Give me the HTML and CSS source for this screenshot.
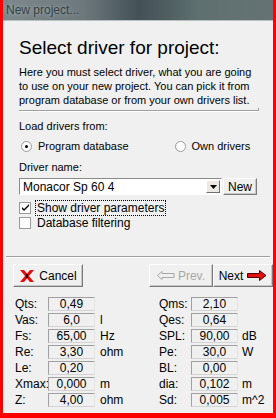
FILE: index.html
```html
<!DOCTYPE html>
<html lang="en">
<head>
    <meta charset="UTF-8">
    <title>New project...</title>
    <link rel="stylesheet" href="styles.css">
</head>
<body>
    <div class="window">
        <div class="titlebar">New project...</div>

        <div class="client">
            <div class="intro">
                <h1>Select driver for project:</h1>
                <p class="text">Here you must select driver, what you are going<br>to use on your new project. You can pick it from<br>program database or from your own drivers list.</p>
                <div class="sep short"></div>

                <div class="line">Load drivers from:</div>
                <div class="radios">
                    <div class="radio checked"><span class="dot"></span>Program database</div>
                    <div class="radio"><span class="dot"></span>Own drivers</div>
                </div>

                <div class="line">Driver name:</div>
                <div class="combo-row">
                    <div class="combo">
                        <span class="combo-text">Monacor Sp 60 4</span>
                        <span class="drop">
                            <svg width="7" height="4" viewBox="0 0 7 4"><path d="M0 0h7L3.5 4z" fill="#000"/></svg>
                        </span>
                    </div>
                    <div class="btn new">New</div>
                </div>

                <div class="check checked">
                    <span class="box">
                        <svg width="9" height="9" viewBox="0 0 9 9"><path d="M1 4l2 2 5-5v2L3 8 1 6z" fill="#000"/></svg>
                    </span>
                    <span class="focus">Show driver parameters</span>
                </div>
                <div class="check">
                    <span class="box"></span>
                    <span>Database filtering</span>
                </div>
            </div>

            <div class="sep wide"></div>

            <div class="buttons">
                <div class="btn cancel">
                    <svg width="16" height="14" viewBox="0 0 16 14">
                        <path d="M1 1h4l3 3.5L11 1h4l-5 6 5 6h-4l-3-3.5L5 13H1l5-6z" fill="#e01010"/>
                        <path d="M7 5h2v4H7z" fill="#200000"/>
                    </svg>
                    Cancel
                </div>
                <div class="nav">
                    <div class="btn prev">
                        <svg width="18" height="9" viewBox="0 0 18 9">
                            <path d="M0.5 4.5L5 0.5v2h12v4H5v2z" fill="none" stroke="#a8a8a8"/>
                        </svg>
                        Prev.
                    </div>
                    <div class="btn next">
                        Next
                        <svg width="20" height="11" viewBox="0 0 20 11">
                            <path d="M0.5 3.5h12v-3L19 5.5l-6.5 5v-3h-12z" fill="#e01010" stroke="#500000"/>
                        </svg>
                    </div>
                </div>
            </div>

            <div class="params">
                <div class="col left">
                    <div class="row"><span class="name">Qts:</span><span class="val">0,49</span><span class="unit"></span></div>
                    <div class="row"><span class="name">Vas:</span><span class="val">6,0</span><span class="unit">l</span></div>
                    <div class="row"><span class="name">Fs:</span><span class="val">65,00</span><span class="unit">Hz</span></div>
                    <div class="row"><span class="name">Re:</span><span class="val">3,30</span><span class="unit">ohm</span></div>
                    <div class="row"><span class="name">Le:</span><span class="val">0,20</span><span class="unit"></span></div>
                    <div class="row"><span class="name">Xmax:</span><span class="val">0,000</span><span class="unit">m</span></div>
                    <div class="row"><span class="name">Z:</span><span class="val">4,00</span><span class="unit">ohm</span></div>
                </div>
                <div class="col right">
                    <div class="row"><span class="name">Qms:</span><span class="val">2,10</span><span class="unit"></span></div>
                    <div class="row"><span class="name">Qes:</span><span class="val">0,64</span><span class="unit"></span></div>
                    <div class="row"><span class="name">SPL:</span><span class="val">90,00</span><span class="unit">dB</span></div>
                    <div class="row"><span class="name">Pe:</span><span class="val">30,0</span><span class="unit">W</span></div>
                    <div class="row"><span class="name">BL:</span><span class="val">0,00</span><span class="unit"></span></div>
                    <div class="row"><span class="name">dia:</span><span class="val">0,102</span><span class="unit">m</span></div>
                    <div class="row"><span class="name">Sd:</span><span class="val">0,005</span><span class="unit">m^2</span></div>
                </div>
            </div>
        </div>
    </div>
</body>
</html>
```

FILE: styles.css
```css
body {
    margin: 0;
    font-family: 'Liberation Sans', Arial, sans-serif;
    font-size: 11px;
    color: #000;
}

.window {
    width: 276px;
    height: 418px;
    box-sizing: border-box;
    background: #f00;
    padding: 0 3px 5px 3px;
    display: flex;
    flex-direction: column;
}

.titlebar {
    height: 20px;
    line-height: 20px;
    padding-left: 3px;
    font-size: 12px;
    color: #334044;
    text-shadow: 0 0 4px rgba(200, 210, 212, 0.7);
    background: linear-gradient(to right, #7d898d 0%, #6c787c 30%, #445157 50%, #4e5d60 60%, #5f7070 72%, #657274 100%);
    border-bottom: 1px solid #b8c0c2;
}

.client {
    flex: 1;
    background: #f0f0f0;
    display: flex;
    flex-direction: column;
}

.intro {
    padding: 0 0 0 16px;
}

h1 {
    margin: 17px 0 0 0;
    font-size: 19px;
    font-weight: normal;
    line-height: 20px;
    height: 20px;
}

.text {
    margin: 7px 0 0 0;
    line-height: 14px;
}

.sep {
    height: 0;
    border-top: 1px solid #a0a0a0;
    border-bottom: 1px solid #fff;
}

.sep.short {
    width: 240px;
    margin-top: 3px;
    position: relative;
}

.sep.short::after {
    content: '';
    position: absolute;
    right: 0;
    top: -3px;
    height: 3px;
    border-right: 1px solid #a0a0a0;
}

.line {
    height: 16px;
    line-height: 16px;
}

.intro .sep + .line {
    margin-top: 6px;
}

.radios {
    display: flex;
    height: 20px;
    align-items: center;
    margin-top: 2px;
}

.radio {
    display: flex;
    align-items: center;
    gap: 6px;
}

.radio + .radio {
    margin-left: 44px;
}

.dot {
    width: 11px;
    height: 11px;
    box-sizing: border-box;
    border-radius: 50%;
    border: 1px solid #9a9a9a;
    background: #fff;
    margin-left: 2px;
    position: relative;
}

.radio.checked .dot::after {
    content: '';
    position: absolute;
    left: 3px;
    top: 3px;
    width: 3px;
    height: 3px;
    border-radius: 50%;
    background: #000;
}

.radios + .line {
    margin-top: 3px;
}

.combo-row {
    display: flex;
    align-items: center;
    margin-top: 3px;
    height: 17px;
}

.combo {
    width: 203px;
    height: 17px;
    box-sizing: border-box;
    background: #fff;
    border: 1px solid;
    border-color: #8a8a8a #fff #fff #8a8a8a;
    display: flex;
    align-items: center;
}

.combo-text {
    flex: 1;
    padding-left: 3px;
    font-size: 12px;
}

.drop {
    width: 14px;
    height: 13px;
    margin-right: 1px;
    background: #ece9e4;
    border: 1px solid;
    border-color: #fff #707070 #707070 #fff;
    box-sizing: border-box;
    display: flex;
    align-items: center;
    justify-content: center;
}

.btn {
    box-sizing: border-box;
    background: #f0f0f0;
    border: 1px solid;
    border-color: #fff #7a7a7a #7a7a7a #fff;
    box-shadow: inset -1px -1px 0 #c8c8c8;
    display: flex;
    align-items: center;
    justify-content: center;
}

.btn.new {
    width: 34px;
    height: 17px;
    margin-left: 1px;
    font-size: 12px;
}

.check {
    display: flex;
    align-items: center;
    height: 15px;
    gap: 6px;
}

.combo-row + .check {
    margin-top: 5px;
}

.box {
    width: 12px;
    height: 12px;
    box-sizing: border-box;
    border: 1px solid #9a9a9a;
    background: #fff;
    display: flex;
    align-items: center;
    justify-content: center;
}

.focus {
    outline: 1px dotted #000;
    padding: 0 1px;
    margin-left: -1px;
}

.check span:last-child {
    font-size: 12px;
}

.sep.wide {
    margin: 26px 3px 0 3px;
}

.buttons {
    display: flex;
    justify-content: space-between;
    margin-top: 6px;
    padding: 0 0 0 10px;
    height: 23px;
}

.nav {
    display: flex;
}

.btn.cancel {
    width: 70px;
    gap: 4px;
    font-size: 12px;
}

.btn.prev {
    width: 64px;
    color: #a8a8a8;
    gap: 3px;
    font-size: 12px;
}

.btn.next {
    width: 60px;
    gap: 4px;
    font-size: 12px;
}

.params {
    display: flex;
    margin-top: 9px;
    padding-left: 12px;
}

.col {
    display: flex;
    flex-direction: column;
}

.col.right {
    margin-left: 23px;
}

.row {
    display: flex;
    align-items: center;
    height: 16px;
    font-size: 12px;
}

.name {
    width: 33px;
}

.val {
    width: 47px;
    height: 14px;
    box-sizing: border-box;
    border: 1px solid;
    border-color: #a0a0a0 #e4e4e4 #d4d4d4 #a0a0a0;
    text-align: center;
    line-height: 12px;
}

.unit {
    margin-left: 5px;
    width: 36px;
}

.right .name {
    width: 32px;
}

.right .unit {
    margin-left: 4px;
}
```
